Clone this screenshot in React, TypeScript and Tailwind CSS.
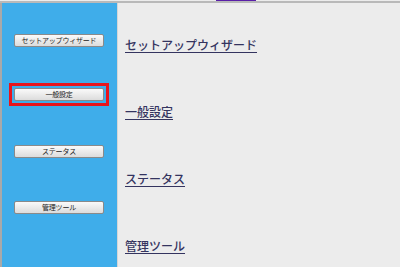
const buttons = ["セットアップウィザード", "一般設定", "ステータス", "管理ツール"];

const MenuButton = ({ label, active }: { label: string; active?: boolean }) => (
  <div className={active ? "border-[3px] border-[#e8141c] p-[2px] -mx-[5px]" : ""}>
    <div className="h-[13px] w-[90px] flex items-center justify-center rounded-[2px] border border-[#8a8a8a] bg-gradient-to-b from-[#fafafa] to-[#dcdcdc] text-[7px] leading-none tracking-[-0.2px] text-[#222] whitespace-nowrap">
      {label}
    </div>
  </div>
);

export default function App() {
  return (
    <div
      className="w-[400px] h-[267px] overflow-hidden bg-[#ececec] flex flex-col"
      style={{ fontFamily: '"Noto Sans CJK JP", "Liberation Sans", sans-serif' }}
    >
      <div className="h-[3px] flex-none border-b-2 border-[#b9b9b9] bg-[#ececec] relative">
        <div className="absolute left-[216px] top-0 w-[40px] h-[1px] bg-[#5a1fa8]" />
      </div>
      <div className="flex flex-1">
        <div className="w-[2px] bg-[#a9a9a9]" />
        <div className="w-[115px] bg-[#3fadea] flex flex-col items-start pl-[12px] pt-[31px]">
          <MenuButton label={buttons[0]} />
          <div className="mt-[36px]">
            <MenuButton label={buttons[1]} active />
          </div>
          <div className="mt-[39px]">
            <MenuButton label={buttons[2]} />
          </div>
          <div className="mt-[43px]">
            <MenuButton label={buttons[3]} />
          </div>
        </div>
        <div className="w-[1px] bg-[#d6d6d6]" />
        <div className="flex-1 flex flex-col items-start pl-[7px] pt-[35px] text-[12px] leading-[14px] font-medium text-[#34345f]">
          <a className="underline underline-offset-2">{buttons[0]}</a>
          <a className="underline underline-offset-2 mt-[53px]">{buttons[1]}</a>
          <a className="underline underline-offset-2 mt-[53px]">{buttons[2]}</a>
          <a className="underline underline-offset-2 mt-[53px]">{buttons[3]}</a>
        </div>
      </div>
    </div>
  );
}
